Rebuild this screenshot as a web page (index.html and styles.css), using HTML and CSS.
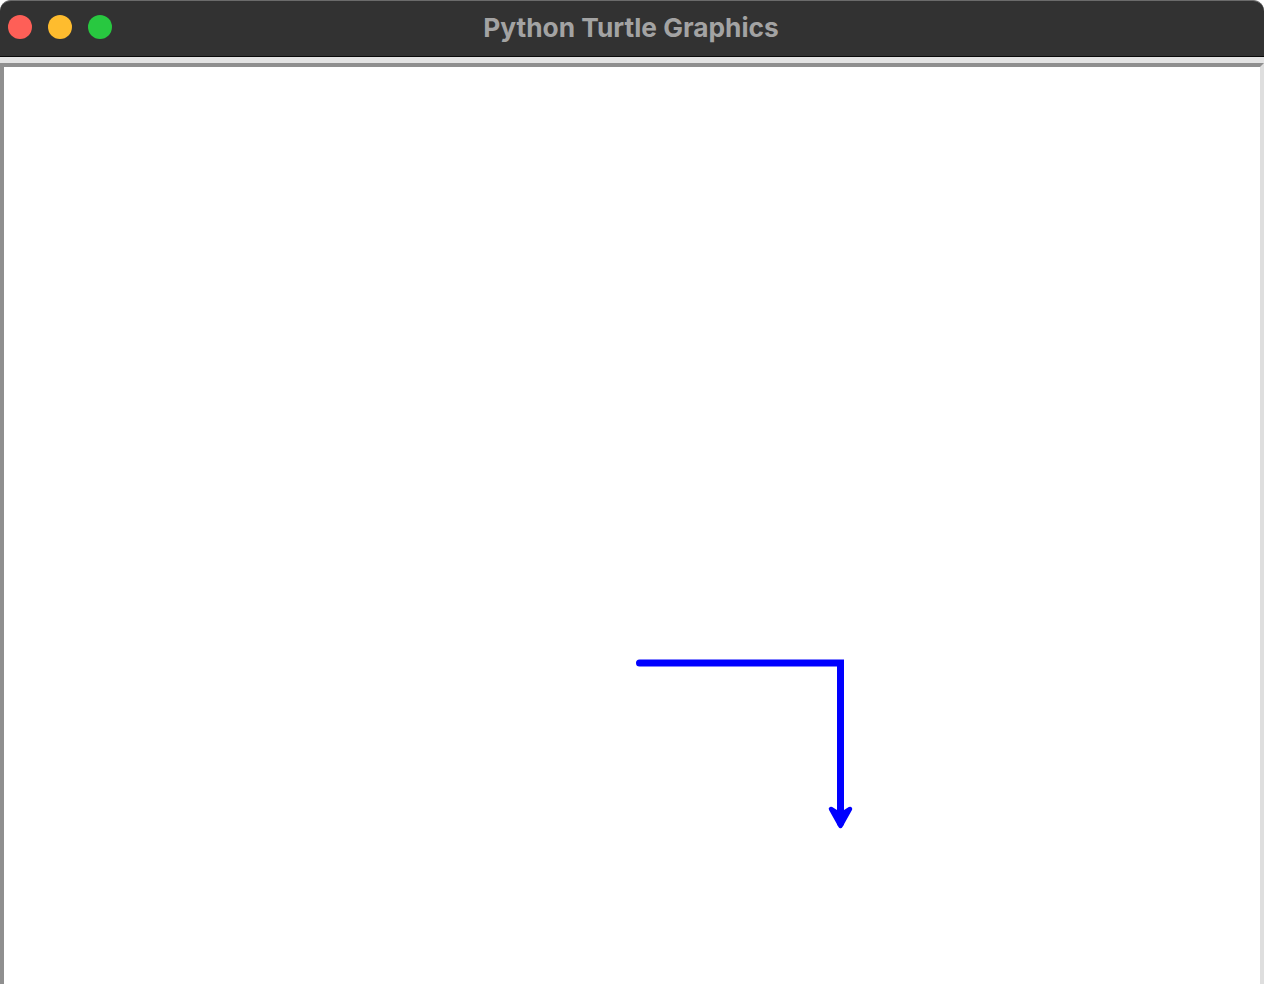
FILE: index.html
```html
<!DOCTYPE html>
<html>
<head>
<meta charset="utf-8">
<title>Python Turtle Graphics</title>
<link rel="stylesheet" href="styles.css">
</head>
<body>
<div class="window">
  <div class="titlebar">
    <div class="lights">
      <span class="light red"></span>
      <span class="light yellow"></span>
      <span class="light green"></span>
    </div>
    <div class="title">Python Turtle Graphics</div>
  </div>
  <div class="body">
    <div class="frame">
      <svg class="canvas" viewBox="4 67 1256 917" width="1256" height="917" xmlns="http://www.w3.org/2000/svg">
        <path d="M639.5 663 H840.5 V823" fill="none" stroke="#0000ff" stroke-width="7" stroke-linecap="round" stroke-linejoin="miter"/>
        <polygon points="840.5,826 831,809 840.5,815 850,809" fill="#0000ff" stroke="#0000ff" stroke-width="4.5" stroke-linejoin="round"/>
      </svg>
    </div>
  </div>
</div>
</body>
</html>
```
FILE: styles.css
```css
html, body {
  margin: 0;
  padding: 0;
  background: #ffffff;
  overflow: hidden;
}
.window {
  width: 1264px;
  height: 984px;
  display: flex;
  flex-direction: column;
}
.titlebar {
  position: relative;
  height: 55px;
  background: #323232;
  border-top: 1px solid #6b6b6b;
  border-bottom: 1px solid #0a0a0a;
  border-radius: 11px 11px 0 0;
  display: flex;
  align-items: center;
  justify-content: center;
}
.lights {
  position: absolute;
  left: 8px;
  top: 14px;
  display: flex;
  gap: 16px;
}
.light {
  width: 24px;
  height: 24px;
  border-radius: 50%;
  display: block;
}
.red { background: #fe5f57; }
.yellow { background: #febc2e; }
.green { background: #28c840; }
.title {
  font-family: Inter, "Liberation Sans", sans-serif;
  font-weight: 700;
  font-size: 26.3px;
  color: #a3a3a3;
  margin-left: -2px;
  margin-top: -2px;
}
.body {
  flex: 1;
  background: #e3e3e3;
  padding-top: 6px;
  display: flex;
  flex-direction: column;
}
.frame {
  flex: 1;
  background: #ffffff;
  border-top: 4px solid #8f8f8f;
  border-left: 4px solid #8f8f8f;
  border-right: 4px solid #dedede;
  overflow: hidden;
}
.canvas {
  display: block;
}
```
